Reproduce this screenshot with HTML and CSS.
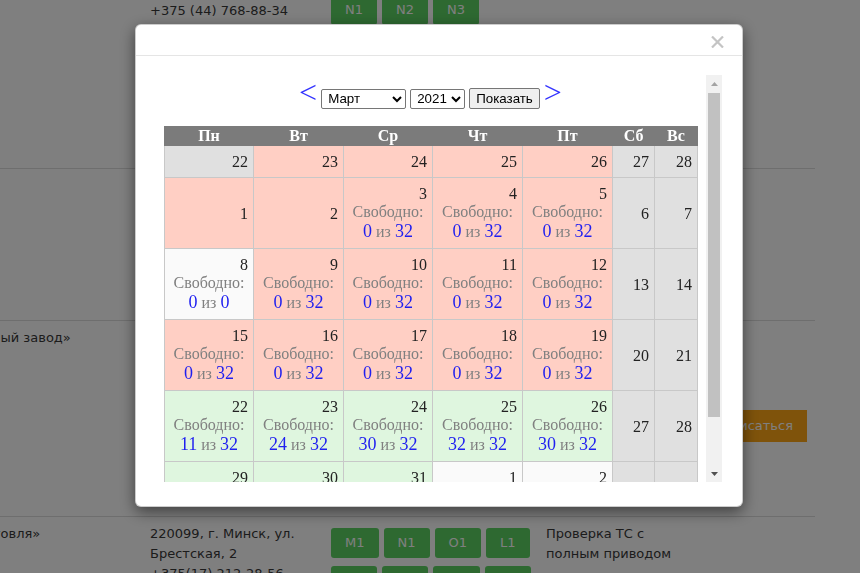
FILE: index.html
```html
<!DOCTYPE html>
<html lang="ru">
<head>
<meta charset="utf-8">
<title>Запись на техосмотр</title>
<link rel="stylesheet" href="styles.css">
</head>
<body>
<div class="page">
  <div class="row row--a">
    <div class="c-name">ОДО «Техосмотр-Сервис»</div>
    <div class="c-addr">г. Минск, ул.<br>Тимирязева, 121<br>+375 (44) 768-88-34</div>
    <div class="c-cats c-cats--top">
      <span class="cat">M1</span><span class="cat">M2</span><span class="cat">M3</span><span class="cat">L1</span>
      <span class="cat">N1</span><span class="cat">N2</span><span class="cat">N3</span>
    </div>
    <div class="c-serv"></div>
    <div class="c-act"></div>
  </div>
  <div class="row row--b">
    <div class="c-name">ОАО «МАЗ»</div>
    <div class="c-addr"></div>
    <div class="c-cats"></div>
    <div class="c-serv"></div>
    <div class="c-act"></div>
  </div>
  <div class="row row--c">
    <div class="c-name">ОАО «Опытный завод»</div>
    <div class="c-addr"></div>
    <div class="c-cats"></div>
    <div class="c-serv"></div>
    <div class="c-act c-act--mid"><span class="sign-up">Записаться</span></div>
  </div>
  <div class="row">
    <div class="c-name">ЧП «Белторговля»</div>
    <div class="c-addr">220099, г. Минск, ул.<br>Брестская, 2<br>+375(17) 212-28-56</div>
    <div class="c-cats">
      <span class="cat">M1</span><span class="cat">N1</span><span class="cat">O1</span><span class="cat">L1</span>
      <span class="cat">N2</span><span class="cat">N3</span><span class="cat">O2</span><span class="cat">O3</span>
    </div>
    <div class="c-serv">Проверка ТС с<br>полным приводом</div>
    <div class="c-act"></div>
  </div>
</div>

<div class="backdrop"></div>

<div class="modal">
  <div class="modal-head">
    <span class="close" aria-label="Закрыть">
      <svg width="13" height="12" viewBox="0 0 13 12"><path d="M1 0.5 L12 11.5 M12 0.5 L1 11.5" stroke="#c4c4c4" stroke-width="2.2" fill="none"/></svg>
    </span>
  </div>
  <div class="modal-body">
    <div class="frame">
      <div class="view">
        <div class="cal-wrap">
          <form class="nav">
            <a class="arrow">&lt;</a>
            <select class="sel sel--month">
              <option>Январь</option><option>Февраль</option><option selected>Март</option><option>Апрель</option>
              <option>Май</option><option>Июнь</option><option>Июль</option><option>Август</option>
              <option>Сентябрь</option><option>Октябрь</option><option>Ноябрь</option><option>Декабрь</option>
            </select>
            <select class="sel sel--year">
              <option>2020</option><option selected>2021</option><option>2022</option>
            </select>
            <button type="button" class="show">Показать</button>
            <a class="arrow">&gt;</a>
          </form>

          <table class="cal">
            <colgroup>
              <col class="w89"><col class="w90"><col class="w89"><col class="w90"><col class="w90"><col class="w42"><col class="w43">
            </colgroup>
            <thead>
              <tr><th>Пн</th><th>Вт</th><th>Ср</th><th>Чт</th><th>Пт</th><th>Сб</th><th>Вс</th></tr>
            </thead>
            <tbody>
              <tr>
                <td class="off"><div class="num">22</div></td>
                <td class="busy"><div class="num">23</div></td>
                <td class="busy"><div class="num">24</div></td>
                <td class="busy"><div class="num">25</div></td>
                <td class="busy"><div class="num">26</div></td>
                <td class="off"><div class="num">27</div></td>
                <td class="off"><div class="num">28</div></td>
              </tr>
              <tr>
                <td class="busy"><div class="num">1</div></td>
                <td class="busy"><div class="num">2</div></td>
                <td class="busy"><div class="num">3</div><div class="free">Свободно:</div><div class="cnt"><b>0</b> <i>из</i> <b>32</b></div></td>
                <td class="busy"><div class="num">4</div><div class="free">Свободно:</div><div class="cnt"><b>0</b> <i>из</i> <b>32</b></div></td>
                <td class="busy"><div class="num">5</div><div class="free">Свободно:</div><div class="cnt"><b>0</b> <i>из</i> <b>32</b></div></td>
                <td class="off"><div class="num">6</div></td>
                <td class="off"><div class="num">7</div></td>
              </tr>
              <tr>
                <td class="empty"><div class="num">8</div><div class="free">Свободно:</div><div class="cnt"><b>0</b> <i>из</i> <b>0</b></div></td>
                <td class="busy"><div class="num">9</div><div class="free">Свободно:</div><div class="cnt"><b>0</b> <i>из</i> <b>32</b></div></td>
                <td class="busy"><div class="num">10</div><div class="free">Свободно:</div><div class="cnt"><b>0</b> <i>из</i> <b>32</b></div></td>
                <td class="busy"><div class="num">11</div><div class="free">Свободно:</div><div class="cnt"><b>0</b> <i>из</i> <b>32</b></div></td>
                <td class="busy"><div class="num">12</div><div class="free">Свободно:</div><div class="cnt"><b>0</b> <i>из</i> <b>32</b></div></td>
                <td class="off"><div class="num">13</div></td>
                <td class="off"><div class="num">14</div></td>
              </tr>
              <tr>
                <td class="busy"><div class="num">15</div><div class="free">Свободно:</div><div class="cnt"><b>0</b> <i>из</i> <b>32</b></div></td>
                <td class="busy"><div class="num">16</div><div class="free">Свободно:</div><div class="cnt"><b>0</b> <i>из</i> <b>32</b></div></td>
                <td class="busy"><div class="num">17</div><div class="free">Свободно:</div><div class="cnt"><b>0</b> <i>из</i> <b>32</b></div></td>
                <td class="busy"><div class="num">18</div><div class="free">Свободно:</div><div class="cnt"><b>0</b> <i>из</i> <b>32</b></div></td>
                <td class="busy"><div class="num">19</div><div class="free">Свободно:</div><div class="cnt"><b>0</b> <i>из</i> <b>32</b></div></td>
                <td class="off"><div class="num">20</div></td>
                <td class="off"><div class="num">21</div></td>
              </tr>
              <tr>
                <td class="open"><div class="num">22</div><div class="free">Свободно:</div><div class="cnt"><b>11</b> <i>из</i> <b>32</b></div></td>
                <td class="open"><div class="num">23</div><div class="free">Свободно:</div><div class="cnt"><b>24</b> <i>из</i> <b>32</b></div></td>
                <td class="open"><div class="num">24</div><div class="free">Свободно:</div><div class="cnt"><b>30</b> <i>из</i> <b>32</b></div></td>
                <td class="open"><div class="num">25</div><div class="free">Свободно:</div><div class="cnt"><b>32</b> <i>из</i> <b>32</b></div></td>
                <td class="open"><div class="num">26</div><div class="free">Свободно:</div><div class="cnt"><b>30</b> <i>из</i> <b>32</b></div></td>
                <td class="off"><div class="num">27</div></td>
                <td class="off"><div class="num">28</div></td>
              </tr>
              <tr>
                <td class="open"><div class="num">29</div><div class="free">Свободно:</div><div class="cnt"><b>32</b> <i>из</i> <b>32</b></div></td>
                <td class="open"><div class="num">30</div><div class="free">Свободно:</div><div class="cnt"><b>32</b> <i>из</i> <b>32</b></div></td>
                <td class="open"><div class="num">31</div><div class="free">Свободно:</div><div class="cnt"><b>32</b> <i>из</i> <b>32</b></div></td>
                <td class="empty"><div class="num">1</div><div class="free">Свободно:</div><div class="cnt"><b>0</b> <i>из</i> <b>0</b></div></td>
                <td class="empty"><div class="num">2</div><div class="free">Свободно:</div><div class="cnt"><b>0</b> <i>из</i> <b>0</b></div></td>
                <td class="off"><div class="num">3</div></td>
                <td class="off"><div class="num">4</div></td>
              </tr>
            </tbody>
          </table>
        </div>
      </div>
      <div class="sb">
        <div class="sb-btn">
          <svg width="7" height="4" viewBox="0 0 7 4"><path d="M0 4 L3.5 0 L7 4 Z" fill="#a3a3a3"/></svg>
        </div>
        <div class="sb-track"><div class="sb-thumb"></div></div>
        <div class="sb-btn">
          <svg width="7" height="4" viewBox="0 0 7 4"><path d="M0 0 L7 0 L3.5 4 Z" fill="#505050"/></svg>
        </div>
      </div>
    </div>
  </div>
</div>
</body>
</html>
```
FILE: styles.css
```css
html, body {
  margin: 0;
  padding: 0;
}

body {
  width: 860px;
  height: 573px;
  overflow: hidden;
  background: #fff;
  font-family: "DejaVu Sans", Verdana, sans-serif;
  font-size: 13px;
  line-height: 20px;
  color: #383838;
}

/* ---- organisation list behind the dialog ---- */
.page {
  width: 901px;
  margin: -46px 0 0 -86px;
}

.row {
  display: grid;
  grid-template-columns: 226px 181px 215px 154px 125px;
  border-bottom: 1px solid #ddd;
  box-sizing: border-box;
}

.row--a { height: 215px; }
.row--b { height: 152px; }
.row--c { height: 196px; }

.c-name { padding-top: 7px; white-space: nowrap; }
.c-addr { padding: 7px 0 0 10px; }
.c-serv { padding: 7px 0 0 10px; }

.c-cats {
  padding: 11px 0 0 10px;
  display: flex;
  flex-wrap: wrap;
  align-content: flex-start;
  gap: 8px 5px;
}

.c-cats--top { padding-top: 3px; }

.cat {
  display: block;
  height: 30px;
  line-height: 30px;
  padding: 0 14px;
  border-radius: 3px;
  background: #5cd263;
  color: #fff;
}

.c-act {
  display: flex;
  justify-content: flex-end;
  padding-right: 8px;
}

.c-act--mid { padding-top: 89px; align-items: flex-start; }

.sign-up {
  display: block;
  height: 32px;
  line-height: 32px;
  padding: 0 14px;
  background: #ffa716;
  color: #fff;
  white-space: nowrap;
}

.backdrop {
  position: fixed;
  inset: 0;
  background: rgba(0, 0, 0, 0.5);
}

/* ---- dialog ---- */
.modal {
  position: fixed;
  left: 135px;
  top: 24px;
  width: 608px;
  height: 483px;
  box-sizing: border-box;
  background: #fff;
  border: 1px solid rgba(0, 0, 0, 0.2);
  border-radius: 6px;
  box-shadow: 0 5px 15px rgba(0, 0, 0, 0.5);
  display: flex;
  flex-direction: column;
}

.modal-head {
  height: 31px;
  box-sizing: border-box;
  border-bottom: 1px solid #e5e5e5;
  display: flex;
  justify-content: flex-end;
  align-items: flex-start;
  padding: 11px 18px 0 0;
}

.close {
  display: block;
  width: 13px;
  height: 12px;
}

.close svg { display: block; }

.modal-body {
  padding: 19px 20px 0 28px;
}

.frame {
  display: flex;
  height: 407px;
}

.view {
  width: 542px;
  overflow: hidden;
}

.cal-wrap {
  width: 533px;
  font-family: "Liberation Serif", "Times New Roman", serif;
  font-size: 16px;
  color: #222;
}

/* month switcher */
.nav {
  display: flex;
  justify-content: center;
  align-items: baseline;
  gap: 4px;
  margin: 0;
  padding-top: 1px;
}

.arrow {
  font-family: "Liberation Serif", "Times New Roman", serif;
  font-size: 32px;
  line-height: 32px;
  color: #3333ff;
  cursor: pointer;
}

.sel, .show {
  font-family: "Liberation Sans", Arial, sans-serif;
  font-size: 13.333px;
}

.sel {
  height: 20px;
  box-sizing: border-box;
  border: 1px solid #767676;
  border-radius: 2px;
  background: #fff;
  color: #000;
  padding: 0 0 0 2px;
}

.sel--month { width: 85px; }
.sel--year { width: 55px; }

.show {
  height: 21px;
  box-sizing: border-box;
  padding: 1px 6px;
  border: 1px solid #767676;
  border-radius: 2px;
  background: #efefef;
  color: #000;
}

/* calendar grid */
.cal {
  margin-top: 17px;
  width: 533px;
  table-layout: fixed;
  border-collapse: collapse;
}

.w89 { width: 89px; }
.w90 { width: 90px; }
.w42 { width: 42px; }
.w43 { width: 43px; }

.cal th {
  background: #7b7b7b;
  color: #fff;
  font-weight: bold;
  font-size: 16px;
  line-height: 18px;
  padding: 0;
  border: 1px solid #7b7b7b;
}

.cal td {
  border: 1px solid #c8c8c8;
  padding: 7px 5px 6px;
  vertical-align: middle;
  line-height: 18px;
  text-align: center;
}

.num { text-align: right; }

.free { color: #808080; white-space: nowrap; }

.cnt {
  line-height: 21px;
  white-space: nowrap;
  color: #808080;
}

.cnt b {
  font-weight: normal;
  font-size: 18px;
  color: #1f1ff0;
}

.cnt i { font-style: normal; }

.busy  { background: #ffcfc4; }
.off   { background: #e0e0e0; }
.open  { background: #dff6df; }
.empty { background: #fafafa; }

/* scrollbar of the calendar frame */
.sb {
  width: 16px;
  background: #f1f1f1;
  display: flex;
  flex-direction: column;
}

.sb-btn {
  height: 17px;
  display: flex;
  align-items: center;
  justify-content: center;
}

.sb-btn svg { display: block; }

.sb-track {
  flex: 1;
  padding: 1px 2px 0;
}

.sb-thumb {
  height: 324px;
  background: #c1c1c1;
}
```
